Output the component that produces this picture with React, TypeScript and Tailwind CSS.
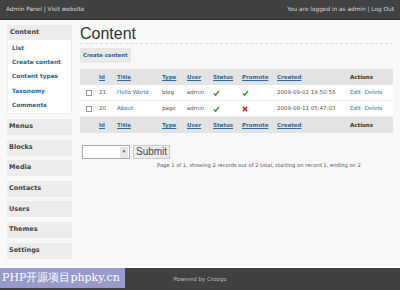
const side = ["Menus", "Blocks", "Media", "Contacts", "Users", "Themes", "Settings"]
const links = ["List", "Create content", "Content types", "Taxonomy", "Comments"]
const rows = [
  { id: 21, title: "Hello World", type: "blog", promote: true, created: "2009-09-02 19:50:56" },
  { id: 20, title: "About", type: "page", promote: false, created: "2009-08-11 05:47:03" },
]
const cols = "grid grid-cols-[13px_18px_45px_25px_26px_29px_35px_73px_1fr] pl-[6px] items-center"

function Check() {
  return (
    <svg width="7" height="6" viewBox="0 0 8 7">
      <path d="M1 4 L3 6 L7 1" stroke="#3a9a2a" strokeWidth="1.8" fill="none" />
    </svg>
  )
}
function Cross() {
  return (
    <svg width="6" height="6" viewBox="0 0 7 7">
      <path d="M1 1 L6 6 M6 1 L1 6" stroke="#d42a2a" strokeWidth="1.8" fill="none" />
    </svg>
  )
}

function HeadRow() {
  return (
    <div className={cols + " h-[16px] bg-[#e3e3e3] text-[5.5px] font-bold"}>
      <span />
      <a className="text-[#2f6b9c] underline">Id</a>
      <a className="text-[#2f6b9c] underline">Title</a>
      <a className="text-[#2f6b9c] underline">Type</a>
      <a className="text-[#2f6b9c] underline">User</a>
      <a className="text-[#2f6b9c] underline">Status</a>
      <a className="text-[#2f6b9c] underline">Promote</a>
      <a className="text-[#2f6b9c] underline">Created</a>
      <span className="text-[#333]">Actions</span>
    </div>
  )
}

export default function App() {
  return (
    <div className="relative flex h-[290px] w-[400px] flex-col overflow-hidden bg-[#f8f8f8] font-['DejaVu_Sans',sans-serif] text-[5.5px] text-[#555]">
      <header className="flex h-[20px] items-center justify-between border-b border-[#2e2e2e] bg-[#414141] px-[6px] text-[5.8px] text-[#d8d8d8]">
        <span>Admin Panel | Visit website</span>
        <span>You are logged in as admin | Log Out</span>
      </header>

      <div className="flex flex-1 gap-[8px] pt-[5px]">
        <aside className="ml-[7px] flex w-[65px] flex-col gap-[4.6px]">
          <div className="bg-[#ececec] px-[1px] pb-[1px]">
            <div className="flex h-[15px] items-center px-[2px] text-[6.5px] font-bold text-[#444]">Content</div>
            <ul className="flex flex-col bg-white py-[1px] pl-[4px]">
              {links.map((l) => (
                <li key={l} className="flex h-[14.3px] items-center text-[5.8px] font-bold text-[#2c5f8e]">{l}</li>
              ))}
            </ul>
          </div>
          {side.map((s) => (
            <div key={s} className="flex h-[16px] items-center bg-[#ececec] px-[2px] text-[6.5px] font-semibold text-[#444]">{s}</div>
          ))}
        </aside>

        <main className="mr-[7px] flex flex-1 flex-col">
          <h1 className="h-[18px] font-['Liberation_Sans',sans-serif] text-[16px] leading-[18px] text-[#333]">Content</h1>
          <div className="border-b border-dashed border-[#ddd]" />
          <div className="mt-[4px] flex">
            <button className="flex h-[15px] items-center bg-[#e8e8e8] px-[3px] text-[5.3px] font-bold text-[#2c5f8e]">Create content</button>
          </div>
          <div className="mt-[6px] flex flex-col bg-white">
            <HeadRow />
            {rows.map((r) => (
              <div key={r.id} className={cols + " h-[16px] border-b border-[#eee] text-[5.5px]"}>
                <span className="block size-[6px] border border-[#999] bg-white" />
                <span>{r.id}</span>
                <a className="text-[#2f6b9c]">{r.title}</a>
                <span>{r.type}</span>
                <span>admin</span>
                <span><Check /></span>
                <span>{r.promote ? <Check /> : <Cross />}</span>
                <span>{r.created}</span>
                <span className="flex gap-[4px] text-[#2f6b9c]"><a>Edit</a><a>Delete</a></span>
              </div>
            ))}
            <HeadRow />
          </div>
          <div className="mt-[12px] flex items-center gap-[3px] pl-[2px]">
            <div className="flex h-[14px] w-[48px] items-center justify-end border border-[#aaa] bg-white pr-[1px]">
              <span className="flex h-[11px] w-[8px] items-center justify-center bg-[#e6e6e6] text-[5px] text-[#444]">▾</span>
            </div>
            <button className="h-[14px] border border-[#ccc] bg-[#ececec] px-[2px] font-['Liberation_Sans',sans-serif] text-[10px] leading-[12px] text-[#444]">Submit</button>
          </div>
          <p className="mt-[3px] pl-[77px] text-[5.2px] text-[#555]">Page 1 of 1, showing 2 records out of 2 total, starting on record 1, ending on 2</p>
        </main>
      </div>

      <footer className="flex h-[23px] items-center justify-center border-t border-white bg-[#414141] text-[5.5px] text-[#bbb]">
        Powered by Croogo
      </footer>

      <div className="absolute bottom-[2px] left-0 flex h-[20px] w-[125px] items-center bg-[#9999cc] px-[2px] font-['DejaVu_Serif',serif] text-[11px] text-white">
        PHP开源项目phpky.cn
      </div>
    </div>
  )
}
